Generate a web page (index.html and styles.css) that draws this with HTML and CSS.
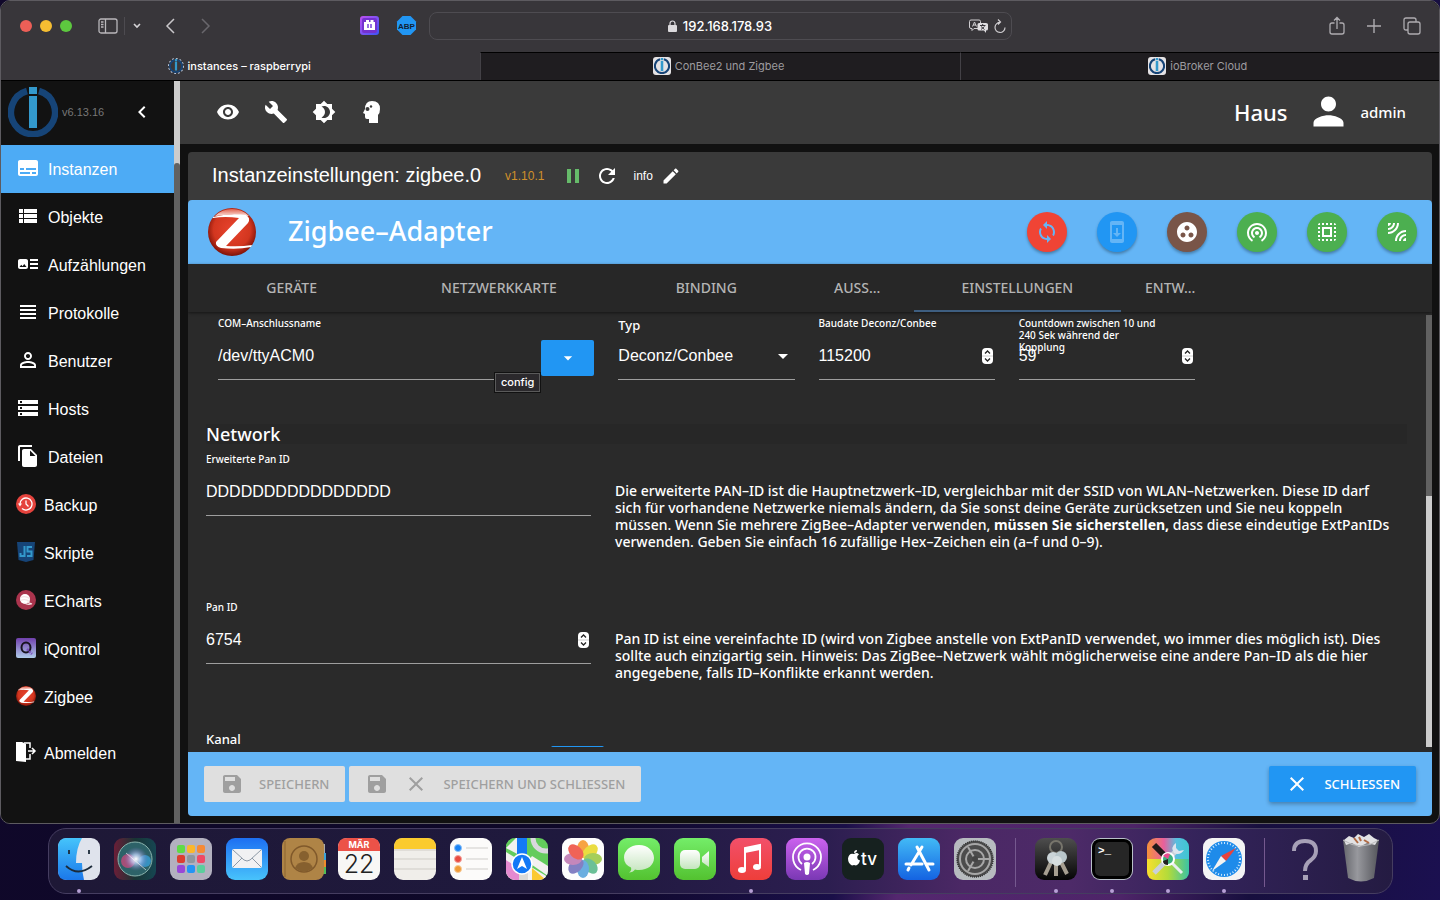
FILE: index.html
```
<!DOCTYPE html>
<html lang="de">
<head>
    <meta charset="UTF-8">
    <meta name="viewport" content="width=device-width, initial-scale=1.0">
    <title>instances - raspberrypi</title>
    <link rel="stylesheet" href="styles.css">
</head>
<body>
    <!-- shared icons -->
    <svg class="sprite" aria-hidden="true">
        <defs>
            <radialGradient id="zigbeeRed" cx="50%" cy="45%" r="55%">
                <stop offset="0" stop-color="#e8442e"/>
                <stop offset="0.7" stop-color="#d2361f"/>
                <stop offset="1" stop-color="#7d1208"/>
            </radialGradient>
            <linearGradient id="zigbeeShine" x1="0" y1="0" x2="0" y2="1">
                <stop offset="0" stop-color="#e0604c"/>
                <stop offset="1" stop-color="#fbe0da"/>
            </linearGradient>
        </defs>
        <symbol id="zigbee" viewBox="0 0 48 48">
            <circle cx="24" cy="24" r="24" fill="url(#zigbeeRed)"/>
            <path d="M7 8Q14 1 24 1t17 7Q24 5 7 8z" fill="url(#zigbeeShine)"/>
            <path d="M5 9Q20 5 38 7q5 3 2 8L18 38q14 1 26-1l-1 2q-14 3-30 1-6-2-5-6L31 10Q17 8 5 10z" fill="#fff"/>
        </symbol>
        <symbol id="iobroker" viewBox="0 0 50 50">
            <path d="M19 4A22 22 0 1 0 31 4" fill="none" stroke="#164477" stroke-width="6.500"/>
            <path d="M21 0h8v7h-8zM21 9h8v32h-8z" fill="#3399cc"/>
        </symbol>
        <symbol id="save" viewBox="0 0 24 24"><path d="M17 3H5c-1.110 0-2 .9-2 2v14c0 1.100.89 2 2 2h14c1.100 0 2-.9 2-2V7l-4-4zm-5 16c-1.660 0-3-1.340-3-3s1.340-3 3-3 3 1.340 3 3-1.340 3-3 3zm3-10H5V5h10v4z"/></symbol>
        <symbol id="close" viewBox="0 0 24 24"><path d="M19 6.410L17.590 5 12 10.590 6.410 5 5 6.410 10.590 12 5 17.590 6.410 19 12 13.410 17.590 19 19 17.590 13.410 12z"/></symbol>
        <symbol id="stepper" viewBox="0 0 11 16">
            <rect width="11" height="16" rx="4" fill="#fff"/>
            <path d="M0 8h11" stroke="#ccc"/>
            <path d="M3 5.500L5.500 3 8 5.500M3 10.500L5.500 13 8 10.500" fill="none" stroke="#222" stroke-width="1.300"/>
        </symbol>
    </svg>

    <div class="window">
        <div class="toolbar">
            <div class="toolbar-left">
                <div class="lights"><i class="red"></i><i class="yellow"></i><i class="green"></i></div>
                <button class="chrome-btn sidebar-btn" aria-label="Seitenleiste"><svg width="20" height="16" viewBox="0 0 20 16" fill="none" stroke="#b9b7bb" stroke-width="1.300"><rect x="1" y="1" width="18" height="14" rx="2"/><path d="M7.500 1v14M3 4h2.500M3 6.500h2.500M3 9h2.500"/></svg></button>
                <button class="chrome-btn menu-btn" aria-label="Tabgruppen"><svg width="8" height="6" viewBox="0 0 8 6" fill="none" stroke="#d5d3d6" stroke-width="1.600"><path d="M1 1l3 3 3-3"/></svg></button>
                <button class="chrome-btn back-btn" aria-label="Zurück"><svg width="10" height="16" viewBox="0 0 10 16" fill="none" stroke="#c9c7ca" stroke-width="1.500"><path d="M9 1L2 8l7 7"/></svg></button>
                <button class="chrome-btn forward-btn" aria-label="Vor"><svg width="10" height="16" viewBox="0 0 10 16" fill="none" stroke="#69676c" stroke-width="1.500"><path d="M1 1l7 7-7 7"/></svg></button>
                <div class="extensions">
                    <button class="chrome-btn" aria-label="Erweiterung">
                        <svg width="19" height="19" viewBox="0 0 19 19">
                            <defs><linearGradient id="ext" x1="0" y1="0" x2="1" y2="1"><stop offset="0" stop-color="#c050f0"/><stop offset="1" stop-color="#3a55f5"/></linearGradient></defs>
                            <rect width="19" height="19" rx="3" fill="url(#ext)"/><rect x="2" y="2" width="15" height="15" rx="2" fill="#7432cf"/>
                            <path d="M4 6h2V4h3v2h1.500V4h3v2H15v8H4z" fill="#fff"/><path d="M8 8v4M11 8v4" stroke="#7442d8" stroke-width="1.500"/>
                        </svg>
                    </button>
                    <button class="chrome-btn" aria-label="Adblock Plus">
                        <svg width="19" height="19" viewBox="0 0 19 19"><path d="M5.500 0h8L19 5.500v8L13.500 19h-8L0 13.500v-8z" fill="#2196f3"/><text x="9.500" y="12.500" class="abp">ABP</text></svg>
                    </button>
                </div>
            </div>
            <div class="address">
                <svg width="9" height="12" viewBox="0 0 9 12"><rect y="5" width="9" height="7" rx="1" fill="#dcdadd"/><path d="M2 5V3.500a2.500 2.500 0 0 1 5 0V5" fill="none" stroke="#dcdadd" stroke-width="1.200"/></svg>
                <span>192.168.178.93</span>
                <div class="address-actions">
                    <svg width="19" height="14" viewBox="0 0 19 14">
                        <path d="M2 1h8q1.500 0 1.500 1.500V8q0 1.500-1.500 1.500H5l-2 2v-2H2Q.5 9.500.5 8V2.500Q.5 1 2 1z" fill="none" stroke="#d0ced1"/>
                        <path d="M3.500 7.500L5.500 3l2 4.500M4 6h3" fill="none" stroke="#d0ced1"/>
                        <path d="M10 4h7q2 0 2 1.500V10q0 1.500-2 1.500V14l-2-2.500h-5Q8.500 11.500 8.500 10V5.500Q8.500 4 10 4z" fill="#e0dee1"/>
                        <path d="M11 6.500h5.500M13.700 5v1.500M12 7.500l3.500 3M15.500 7.500l-3.500 3" stroke="#38363b"/>
                    </svg>
                    <svg width="12" height="14" viewBox="0 0 12 14" fill="none" stroke="#d0ced1" stroke-width="1.200"><path d="M4 .5L6.500 3 4 5.500M6.500 3.500a5 5 0 1 0 4.500 5"/></svg>
                </div>
            </div>
            <div class="toolbar-right">
                <button class="chrome-btn" aria-label="Teilen"><svg width="16" height="20" viewBox="0 0 16 20" fill="none" stroke="#aeacb0" stroke-width="1.300"><path d="M5.500 7H3Q1 7 1 9v7q0 2 2 2h10q2 0 2-2V9q0-2-2-2h-2.500M8 13V1.500M5 4.500l3-3 3 3"/></svg></button>
                <button class="chrome-btn" aria-label="Neuer Tab"><svg width="14" height="14" viewBox="0 0 14 14" fill="none" stroke="#aeacb0" stroke-width="1.400"><path d="M7 0v14M0 7h14"/></svg></button>
                <button class="chrome-btn" aria-label="Tabübersicht"><svg width="18" height="18" viewBox="0 0 18 18" fill="none" stroke="#aeacb0" stroke-width="1.300"><rect x="5" y="5" width="12" height="12" rx="2"/><path d="M5 13H3q-2 0-2-2V3q0-2 2-2h8q2 0 2 2v2"/></svg></button>
            </div>
        </div>
        <nav class="browser-tabs">
            <a href="#" class="browser-tab current"><svg width="16" height="16" viewBox="-4 -4 58 58"><circle cx="25" cy="25" r="27" fill="none" stroke="#b9c4d4" stroke-width="4" stroke-dasharray="7 7"/><use href="#iobroker" width="50" height="50"/></svg>instances – raspberrypi</a>
            <a href="#" class="browser-tab"><span class="favicon"><svg width="16" height="16"><use href="#iobroker"/></svg></span>ConBee2 und Zigbee</a>
            <a href="#" class="browser-tab"><span class="favicon"><svg width="16" height="16"><use href="#iobroker"/></svg></span>ioBroker Cloud</a>
        </nav>

        <div class="app">
            <aside class="sidebar">
                <div class="sidebar-scroll">
                    <div class="brand">
                        <svg width="50" height="50"><use href="#iobroker"/></svg>
                        <span>v6.13.16</span>
                        <button class="icon-btn" aria-label="Menü schließen"><svg width="24" height="24" viewBox="0 0 24 24"><path d="M15.410 7.410L14 6l-6 6 6 6 1.410-1.410L10.830 12z"/></svg></button>
                    </div>
                    <nav class="menu">
                        <a href="#" class="active"><svg width="24" height="24" viewBox="0 0 24 24"><path d="M20 4H4c-1.100 0-2 .9-2 2v12c0 1.100.9 2 2 2h16c1.100 0 2-.9 2-2V6c0-1.100-.9-2-2-2zM4 12h4v2H4v-2zm10 6H4v-2h10v2zm6 0h-4v-2h4v2zm0-4H10v-2h10v2z"/></svg>Instanzen</a>
                        <a href="#"><svg width="24" height="24" viewBox="0 0 24 24"><path d="M3 14h4v-4H3v4zm0 5h4v-4H3v4zM3 9h4V5H3v4zm5 5h13v-4H8v4zm0 5h13v-4H8v4zM8 5v4h13V5H8z"/></svg>Objekte</a>
                        <a href="#"><svg width="24" height="24" viewBox="0 0 24 24"><path d="M22 13h-8v-2h8v2zm0-6h-8v2h8V7zm-8 10h8v-2h-8v2zm-2-8v6c0 1.100-.9 2-2 2H4c-1.100 0-2-.9-2-2V9c0-1.100.9-2 2-2h6c1.100 0 2 .9 2 2zm-1.500 6l-2.250-3-1.750 2.260-1.250-1.510L3.500 15h7z"/></svg>Aufzählungen</a>
                        <a href="#"><svg width="24" height="24" viewBox="0 0 24 24"><path d="M4 15h16v-2H4v2zm0 4h16v-2H4v2zm0-8h16V9H4v2zm0-6v2h16V5H4z"/></svg>Protokolle</a>
                        <a href="#"><svg width="24" height="24" viewBox="0 0 24 24"><path d="M12 5.900c1.160 0 2.100.94 2.100 2.100s-.94 2.100-2.100 2.100S9.900 9.160 9.900 8s.94-2.100 2.100-2.100m0 9c2.970 0 6.100 1.460 6.100 2.100v1.100H5.900V17c0-.64 3.130-2.100 6.100-2.100M12 4C9.790 4 8 5.790 8 8s1.790 4 4 4 4-1.790 4-4-1.790-4-4-4zm0 9c-2.670 0-8 1.340-8 4v3h16v-3c0-2.660-5.330-4-8-4z"/></svg>Benutzer</a>
                        <a href="#"><svg width="24" height="24" viewBox="0 0 24 24"><path d="M2 20h20v-4H2v4zm2-3h2v2H4v-2zM2 4v4h20V4H2zm4 3H4V5h2v2zm-4 7h20v-4H2v4zm2-3h2v2H4v-2z"/></svg>Hosts</a>
                        <a href="#"><svg width="24" height="24" viewBox="0 0 24 24"><path d="M16 1H4c-1.100 0-2 .9-2 2v14h2V3h12V1zm-1 4l6 6v10c0 1.100-.9 2-2 2H7.990C6.890 23 6 22.100 6 21l.01-14c0-1.100.89-2 1.990-2h7zm-1 7h5.500L14 6.500V12z"/></svg>Dateien</a>
                        <a href="#"><svg width="20" height="20" viewBox="0 0 20 20"><circle cx="10" cy="10" r="10" fill="#e5433d"/><path d="M4 10a6 6 0 1 1 2 4.500M10 6.500V10l2.500 2.500" fill="none" stroke="#fff" stroke-width="1.300"/><path d="M2 9.500h4l-2 3z"/></svg>Backup</a>
                        <a href="#"><svg width="20" height="20" viewBox="0 0 20 20"><path d="M1 0h18l-1.500 18L10 20l-7.500-2z" fill="#164477"/><path d="M8.500 4v10H4.500v-3M16 5h-4.500v4.500h4V14h-4.500" fill="none" stroke="#3399cc" stroke-width="2"/></svg>Skripte</a>
                        <a href="#"><svg width="20" height="20" viewBox="0 0 20 20"><circle cx="10" cy="10" r="10" fill="#aa344d"/><circle cx="9" cy="9" r="5"/><path d="M11 12l5 2M8 13q4 2 7 1M4.500 7.500q5-2 9 1M4.500 10.500q5-2 9 1" fill="none" stroke="#f4e3e6" stroke-width="1.300"/></svg>ECharts</a>
                        <a href="#">
                            <svg width="20" height="20" viewBox="0 0 20 20">
                                <defs><linearGradient id="iq" x1="0" y1="0" x2="0" y2="1"><stop offset="0" stop-color="#7040ac"/><stop offset="1" stop-color="#afcbea"/></linearGradient></defs>
                                <rect width="20" height="20" rx="2" fill="url(#iq)"/><ellipse cx="10" cy="9.500" rx="4.500" ry="5" fill="none" stroke="#17131f" stroke-width="2"/><path d="M11 11l5 5" stroke="#7b4ec0" stroke-width="2.500" stroke-dasharray="2 1"/>
                            </svg>iQontrol</a>
                        <a href="#"><svg width="20" height="20"><use href="#zigbee"/></svg>Zigbee</a>
                        <a href="#" class="logout"><svg width="20" height="20" viewBox="0 0 20 20"><path d="M0 0h6l4 2v18l-10-1z"/><path d="M8 1h6v5M14 12v5h-4M12 9h7M16 6l3 3-3 3" fill="none" stroke="#fff" stroke-width="1.500"/></svg>Abmelden</a>
                    </nav>
                </div>
                <div class="scrollbar side-bar"><div class="thumb"></div></div>
            </aside>

            <main>
                <header class="appbar">
                    <button class="icon-btn" aria-label="Anzeigen"><svg width="24" height="24" viewBox="0 0 24 24"><path d="M12 4.500C7 4.500 2.730 7.610 1 12c1.730 4.390 6 7.500 11 7.500s9.270-3.110 11-7.500c-1.730-4.390-6-7.500-11-7.500zM12 17c-2.760 0-5-2.240-5-5s2.240-5 5-5 5 2.240 5 5-2.240 5-5 5zm0-8c-1.660 0-3 1.340-3 3s1.340 3 3 3 3-1.340 3-3-1.340-3-3-3z"/></svg></button>
                    <button class="icon-btn" aria-label="Systemeinstellungen"><svg width="24" height="24" viewBox="0 0 24 24"><path d="M22.700 19l-9.100-9.100c.9-2.300.4-5-1.500-6.900-2-2-5-2.400-7.400-1.300L9 6 6 9 1.600 4.700C.4 7.100.9 10.100 2.900 12.100c1.900 1.900 4.600 2.400 6.900 1.500l9.100 9.100c.4.4 1 .4 1.400 0l2.300-2.300c.5-.4.5-1.100.1-1.400z"/></svg></button>
                    <button class="icon-btn" aria-label="Farbschema"><svg width="24" height="24" viewBox="0 0 24 24"><path d="M20 8.690V4h-4.690L12 .69 8.690 4H4v4.690L.69 12 4 15.310V20h4.690L12 23.310 15.310 20H20v-4.690L23.310 12 20 8.690zM12 18c-.89 0-1.740-.2-2.500-.55C11.560 16.500 13 14.420 13 12s-1.440-4.500-3.500-5.450C10.260 6.200 11.110 6 12 6c3.310 0 6 2.690 6 6s-2.690 6-6 6z"/></svg></button>
                    <button class="icon-btn" aria-label="Expertenmodus"><svg width="24" height="24" viewBox="0 0 24 24"><path d="M12 1q8 0 8 8 0 4-2 6v8H9v-4H7q-2 0-2-2v-3l-2-1 2-4Q5 1 12 1z"/><g fill="#3a3a3a"><circle cx="7.500" cy="9" r="2"/><circle cx="11" cy="6.500" r="1.200"/></g></svg></button>
                    <div class="account">
                        <span class="site">Haus</span>
                        <svg width="45" height="45" viewBox="0 0 24 24"><path d="M12 12c2.210 0 4-1.790 4-4s-1.790-4-4-4-4 1.790-4 4 1.790 4 4 4zm0 2c-2.670 0-8 1.340-8 4v2h16v-2c0-2.660-5.330-4-8-4z"/></svg>
                        <span>admin</span>
                    </div>
                </header>

                <section class="panel">
                    <div class="panel-head">
                        <h1>Instanzeinstellungen: zigbee.0</h1>
                        <span class="version">v1.10.1</span>
                        <button class="icon-btn pause" aria-label="Pause"><svg width="24" height="24" viewBox="0 0 24 24"><path d="M6 19h4V5H6v14zm8-14v14h4V5h-4z"/></svg></button>
                        <button class="icon-btn" aria-label="Neu starten"><svg width="24" height="24" viewBox="0 0 24 24"><path d="M17.650 6.350C16.200 4.900 14.210 4 12 4c-4.420 0-7.990 3.580-7.990 8s3.570 8 7.990 8c3.730 0 6.840-2.550 7.730-6h-2.080c-.82 2.330-3.040 4-5.650 4-3.310 0-6-2.690-6-6s2.690-6 6-6c1.660 0 3.140.69 4.220 1.780L13 11h7V4l-2.350 2.350z"/></svg></button>
                        <button class="icon-btn loglevel">info <svg width="20" height="20" viewBox="0 0 24 24"><path d="M3 17.250V21h3.750L17.810 9.940l-3.750-3.750L3 17.250zM20.710 7.040c.39-.39.39-1.020 0-1.410l-2.340-2.340c-.39-.39-1.020-.39-1.410 0l-1.830 1.830 3.750 3.750 1.830-1.830z"/></svg></button>
                    </div>

                    <div class="adapter-head">
                        <svg width="48" height="48"><use href="#zigbee"/></svg>
                        <h2>Zigbee–Adapter</h2>
                        <div class="round-buttons">
                            <button class="round reset" aria-label="Reset"><svg width="24" height="24" viewBox="0 0 24 24"><path d="M12 4V1L8 5l4 4V6c3.310 0 6 2.690 6 6 0 1.010-.25 1.970-.7 2.800l1.460 1.460C19.540 15.030 20 13.570 20 12c0-4.420-3.580-8-8-8zm0 14c-3.310 0-6-2.690-6-6 0-1.010.25-1.970.7-2.800L5.240 7.740C4.460 8.970 4 10.430 4 12c0 4.420 3.580 8 8 8v3l4-4-4-4v3z"/></svg></button>
                            <button class="round update" aria-label="Update"><svg width="24" height="24" viewBox="0 0 24 24"><path d="M17 1.010L7 1c-1.100 0-2 .9-2 2v18c0 1.100.9 2 2 2h10c1.100 0 2-.9 2-2V3c0-1.100-.9-1.990-2-1.990zM17 19H7V5h10v14zm-1-6h-3V8h-2v5H8l4 4 4-4z"/></svg></button>
                            <button class="round group" aria-label="Gruppe"><svg width="24" height="24" viewBox="0 0 24 24"><path d="M12 2C6.480 2 2 6.480 2 12s4.480 10 10 10 10-4.480 10-10S17.520 2 12 2zM8 17.500c-1.380 0-2.500-1.120-2.500-2.500s1.120-2.500 2.500-2.500 2.500 1.120 2.500 2.500-1.120 2.500-2.500 2.500zM9.500 8c0-1.380 1.120-2.500 2.500-2.500s2.500 1.120 2.500 2.500-1.120 2.500-2.500 2.500S9.500 9.380 9.500 8zm6.500 9.500c-1.380 0-2.500-1.120-2.500-2.500s1.120-2.500 2.500-2.500 2.500 1.120 2.500 2.500-1.120 2.500-2.500 2.500z"/></svg></button>
                            <button class="round" aria-label="Touchlink"><svg width="24" height="24" viewBox="0 0 24 24"><path d="M12 11c-1.100 0-2 .9-2 2s.9 2 2 2 2-.9 2-2-.9-2-2-2zm6 2c0-3.310-2.690-6-6-6s-6 2.690-6 6c0 2.220 1.210 4.150 3 5.190l1-1.740c-1.190-.7-2-1.970-2-3.450 0-2.210 1.790-4 4-4s4 1.790 4 4c0 1.480-.81 2.750-2 3.450l1 1.740c1.790-1.040 3-2.970 3-5.190zM12 3C6.480 3 2 7.480 2 13c0 3.700 2.010 6.920 4.990 8.650l1-1.730C5.610 18.530 4 15.960 4 13c0-4.420 3.580-8 8-8s8 3.580 8 8c0 2.960-1.610 5.530-4 6.920l1 1.730c2.990-1.730 5-4.950 5-8.650 0-5.520-4.480-10-10-10z"/></svg></button>
                            <button class="round" aria-label="QR-Code"><svg width="24" height="24" viewBox="0 0 24 24"><path d="M3 5h2V3c-1.100 0-2 .9-2 2zm0 8h2v-2H3v2zm4 8h2v-2H7v2zM3 9h2V7H3v2zm10-6h-2v2h2V3zm6 0v2h2c0-1.100-.9-2-2-2zM5 21v-2H3c0 1.100.9 2 2 2zm-2-4h2v-2H3v2zM9 3H7v2h2V3zm2 18h2v-2h-2v2zm8-8h2v-2h-2v2zm0 8c1.100 0 2-.9 2-2h-2v2zm0-12h2V7h-2v2zm0 8h2v-2h-2v2zm-4 4h2v-2h-2v2zm0-16h2V3h-2v2zM7 17h10V7H7v10zm2-8h6v6H9V9z"/></svg></button>
                            <button class="round" aria-label="Koppeln"><svg width="24" height="24" viewBox="0 0 24 24"><path d="M6 3H3v3c1.660 0 3-1.340 3-3zm8 0h-2c0 4.970-4.030 9-9 9v2c6.080 0 11-4.930 11-11zm-4 0H8c0 2.760-2.240 5-5 5v2c3.870 0 7-3.130 7-7zm0 18h2c0-4.970 4.030-9 9-9v-2c-6.070 0-11 4.930-11 11zm8 0h3v-3c-1.660 0-3 1.340-3 3zm-4 0h2c0-2.760 2.240-5 5-5v-2c-3.870 0-7 3.130-7 7z"/></svg></button>
                        </div>
                    </div>

                    <nav class="tabs">
                        <a href="#" class="wide">GERÄTE</a>
                        <a href="#" class="wide">NETZWERKKARTE</a>
                        <a href="#" class="wide">BINDING</a>
                        <a href="#">AUSS...</a>
                        <a href="#" class="wide selected">EINSTELLUNGEN</a>
                        <a href="#">ENTW...</a>
                    </nav>

                    <div class="content">
                        <form class="settings" id="settings">
                            <div class="row connection">
                                <div class="field port">
                                    <label for="port">COM–Anschlussname</label>
                                    <div class="control"><input type="text" id="port" value="/dev/ttyACM0"></div>
                                    <button type="button" class="port-btn" aria-label="Ports"><svg width="20" height="20" viewBox="0 0 24 24"><path d="M7 10l5 5 5-5z"/></svg></button>
                                    <div class="tooltip">config</div>
                                </div>
                                <div class="field">
                                    <label for="type" class="large">Typ</label>
                                    <div class="control">
                                        <select id="type"><option>Deconz/Conbee</option></select>
                                        <svg width="24" height="24" viewBox="0 0 24 24"><path d="M7 10l5 5 5-5z"/></svg>
                                    </div>
                                </div>
                                <div class="field">
                                    <label for="baud">Baudate Deconz/Conbee</label>
                                    <div class="control"><input type="number" id="baud" value="115200"><svg class="stepper" width="11" height="16"><use href="#stepper"/></svg></div>
                                </div>
                                <div class="field">
                                    <label for="countdown">Countdown zwischen 10 und 240 Sek während der Kopplung</label>
                                    <div class="control"><input type="number" id="countdown" value="59"><svg class="stepper" width="11" height="16"><use href="#stepper"/></svg></div>
                                </div>
                            </div>

                            <h3>Network</h3>
                            <div class="row described">
                                <div class="field">
                                    <label for="extpan">Erweiterte Pan ID</label>
                                    <div class="control"><input type="text" id="extpan" value="DDDDDDDDDDDDDDDD"></div>
                                </div>
                                <p>Die erweiterte PAN–ID ist die Hauptnetzwerk–ID, vergleichbar mit der SSID von WLAN–Netzwerken. Diese ID darf<br>sich für vorhandene Netzwerke niemals ändern, da Sie sonst deine Geräte zurücksetzen und Sie neu koppeln<br>müssen. Wenn Sie mehrere ZigBee–Adapter verwenden, <b>müssen Sie sicherstellen,</b> dass diese eindeutige ExtPanIDs<br>verwenden. Geben Sie einfach 16 zufällige Hex–Zeichen ein (a–f und 0–9).</p>
                            </div>
                            <div class="row described short">
                                <div class="field">
                                    <label for="pan">Pan ID</label>
                                    <div class="control"><input type="number" id="pan" value="6754"><svg class="stepper" width="11" height="16"><use href="#stepper"/></svg></div>
                                </div>
                                <p>Pan ID ist eine vereinfachte ID (wird von Zigbee anstelle von ExtPanID verwendet, wo immer dies möglich ist). Dies<br>sollte auch einzigartig sein. Hinweis: Das ZigBee–Netzwerk wählt möglicherweise eine andere Pan–ID als die hier<br>angegebene, falls ID–Konflikte erkannt werden.</p>
                            </div>
                            <div class="row channel">
                                <span>Kanal</span>
                                <button type="button" class="port-btn" aria-label="Kanal"></button>
                            </div>
                        </form>
                        <div class="scrollbar"><div class="thumb"></div></div>
                    </div>

                    <footer>
                        <button class="btn" disabled><svg width="24" height="24"><use href="#save"/></svg>SPEICHERN</button>
                        <button class="btn" disabled><svg width="24" height="24"><use href="#save"/></svg><svg width="24" height="24"><use href="#close"/></svg>SPEICHERN UND SCHLIESSEN</button>
                        <button class="btn primary"><svg width="24" height="24"><use href="#close"/></svg>SCHLIESSEN</button>
                    </footer>
                </section>
            </main>
        </div>
    </div>

    <nav class="dock">
        <button class="running" aria-label="Finder">
            <svg viewBox="0 0 42 42">
                <defs><linearGradient id="fi" x1="0" y1="0" x2="0" y2="1"><stop offset="0" stop-color="#45c4fb"/><stop offset="1" stop-color="#1b78ea"/></linearGradient></defs>
                <rect width="42" height="42" rx="9" fill="#dfe3ec"/><path d="M24 0H9Q0 0 0 9v24q0 9 9 9h17q-2-8-2-17h-6Q18 10 24 0z" fill="url(#fi)"/>
                <path d="M11 12v4M31 12v4M8 28q12 11 26 0" fill="none" stroke="#1c2b3a" stroke-width="1.800"/>
            </svg>
        </button>
        <button aria-label="Siri">
            <svg viewBox="0 0 42 42">
                <defs>
                    <linearGradient id="si" x1="0" y1="0" x2="1" y2="0"><stop offset="0" stop-color="#6b1e37"/><stop offset="0.500" stop-color="#183434"/><stop offset="1" stop-color="#164652"/></linearGradient>
                    <radialGradient id="sg"><stop offset="0" stop-color="#fff"/><stop offset="0.400" stop-color="#c3d6ff" stop-opacity="0.700"/><stop offset="1" stop-color="#76b" stop-opacity="0"/></radialGradient>
                </defs>
                <rect width="42" height="42" rx="9" fill="url(#si)"/><circle cx="21" cy="21" r="17" fill="#2d6268" stroke="#8bb4ae"/>
                <circle cx="14" cy="23" r="7" fill="#d8477e" opacity="0.700"/><circle cx="31" cy="23" r="6" fill="#3aa6e4" opacity="0.700"/><circle cx="22" cy="21" r="12" fill="url(#sg)"/><path d="M12 15l20 17" stroke="#fff" opacity="0.600"/>
            </svg>
        </button>
        <button aria-label="Launchpad">
            <svg viewBox="0 0 42 42">
                <rect width="42" height="42" rx="9" fill="#b3b1bf"/>
                <g><rect x="7" y="7" width="8" height="8" rx="2" fill="#5fdc46"/><rect x="17" y="7" width="8" height="8" rx="2" fill="#fbb72c"/><rect x="27" y="7" width="8" height="8" rx="2" fill="#f68a35"/>
                <rect x="7" y="17" width="8" height="8" rx="2" fill="#dd3e30"/><rect x="17" y="17" width="8" height="8" rx="2" fill="#8f979f"/><rect x="27" y="17" width="8" height="8" rx="2" fill="#f04965"/>
                <rect x="7" y="27" width="8" height="8" rx="2" fill="#9947d7"/><rect x="17" y="27" width="8" height="8" rx="2" fill="#2494f4"/><rect x="27" y="27" width="8" height="8" rx="2" fill="#5bcf9c"/></g>
            </svg>
        </button>
        <button aria-label="Mail">
            <svg viewBox="0 0 42 42">
                <defs><linearGradient id="ma" x1="0" y1="0" x2="0" y2="1"><stop offset="0" stop-color="#1d6ff2"/><stop offset="1" stop-color="#48c3fb"/></linearGradient></defs>
                <rect width="42" height="42" rx="9" fill="url(#ma)"/><rect x="6" y="11" width="30" height="19" rx="2" fill="#f1f1f3"/><path d="M7 12l11 10q3 2 6 0l11-10M7 29l9-9M35 29l-9-9" fill="none" stroke="#8d99a6"/>
            </svg>
        </button>
        <button aria-label="Kontakte">
            <svg viewBox="0 0 42 42">
                <path d="M40 6h3v10h-3z" fill="#aaa"/><path d="M40 15h4v8h-4z" fill="#3ea3d8"/><path d="M40 22h4v8h-4z" fill="#ef8b2c"/><path d="M40 29h4v7h-4z" fill="#52bd56"/>
                <rect width="42" height="42" rx="8" fill="#af8446"/><path d="M3 3v36" stroke="#8c6530"/>
                <circle cx="22" cy="21" r="13" fill="none" stroke="#80592b" stroke-width="1.500"/><circle cx="22" cy="18" r="5" fill="#86602f"/><path d="M13 30q2-6 9-6t9 6q-9 7-18 0z" fill="#86602f"/>
            </svg>
        </button>
        <button aria-label="Kalender">
            <svg viewBox="0 0 42 42">
                <rect width="42" height="42" rx="9" fill="#f8f7f5"/><path d="M0 13V9q0-9 9-9h24q9 0 9 9v4z" fill="#ec5248"/>
                <text x="21" y="10" class="cal-month">MÄR</text><text x="21" y="35" class="cal-day">22</text>
            </svg>
        </button>
        <button aria-label="Notizen">
            <svg viewBox="0 0 42 42">
                <rect width="42" height="42" rx="9" fill="#f0eeea"/><path d="M0 11V9q0-9 9-9h24q9 0 9 9v2z" fill="#fbcb2e"/><path d="M0 12h42M0 21h42M0 31h42" stroke="#cfccc6"/>
            </svg>
        </button>
        <button aria-label="Erinnerungen">
            <svg viewBox="0 0 42 42">
                <rect width="42" height="42" rx="9" fill="#fcfbfa"/><path d="M16 10h22M16 21h22M16 31h22" stroke="#cfcdca"/>
                <g stroke-width="1"><circle cx="8" cy="10" r="3.500" fill="#1b83f4" stroke="#8cc0f8"/><circle cx="8" cy="21" r="3.500" fill="#e84b41" stroke="#f4a5a0"/><circle cx="8" cy="31" r="3.500" fill="#f09b38" stroke="#f8cd9b"/></g>
            </svg>
        </button>
        <button aria-label="Karten">
            <svg viewBox="0 0 42 42">
                <defs><clipPath id="mapclip"><rect width="42" height="42" rx="9"/></clipPath></defs>
                <g clip-path="url(#mapclip)">
                    <rect width="42" height="42" fill="#63cc5c"/><path d="M0 14l42 25v3H0z" fill="#f3f1f0"/><path d="M0 22l15 10v10H0z" fill="#e48ad0"/><path d="M26 30l14 12H26z" fill="#fbc931"/><path d="M26 18l16 10v10L22 24z" fill="#f3f1f0"/><path d="M0 10L10 0h5v18z" fill="#f3f1f0"/><path d="M0 0h8L0 9z" fill="#63cc5c"/><circle cx="40" cy="0" r="13" fill="none" stroke="#d8d8dc" stroke-width="5"/>
                    <path d="M11 0h10v24H11z" fill="#1379f6"/><path d="M13 32h9v10h-9z" fill="#dbd9d6"/>
                </g>
                <circle cx="16" cy="26" r="10" fill="#1379f6" stroke="#fff" stroke-width="1.500"/><path d="M16 19l5 12-5-3-5 3z" fill="#fff"/>
            </svg>
        </button>
        <button aria-label="Fotos">
            <svg viewBox="0 0 42 42">
                <rect width="42" height="42" rx="9" fill="#fdfdfd"/>
                <g opacity="0.900"><ellipse cx="21" cy="11" rx="6" ry="9" fill="#f79a2f"/><ellipse cx="21" cy="11" rx="6" ry="9" fill="#e9d92d" transform="rotate(45 21 21)"/><ellipse cx="21" cy="11" rx="6" ry="9" fill="#9cc94a" transform="rotate(90 21 21)"/><ellipse cx="21" cy="11" rx="6" ry="9" fill="#5cba8c" transform="rotate(135 21 21)"/>
                <ellipse cx="21" cy="11" rx="6" ry="9" fill="#5ba6dd" transform="rotate(180 21 21)"/><ellipse cx="21" cy="11" rx="6" ry="9" fill="#7673bd" transform="rotate(225 21 21)"/><ellipse cx="21" cy="11" rx="6" ry="9" fill="#c07bb4" transform="rotate(270 21 21)"/><ellipse cx="21" cy="11" rx="6" ry="9" fill="#ef5346" transform="rotate(315 21 21)"/></g>
            </svg>
        </button>
        <button aria-label="Nachrichten">
            <svg viewBox="0 0 42 42">
                <defs><linearGradient id="gr" x1="0" y1="0" x2="0" y2="1"><stop offset="0" stop-color="#74ed69"/><stop offset="1" stop-color="#53c230"/></linearGradient><linearGradient id="wh" x1="0" y1="0" x2="0" y2="1"><stop offset="0" stop-color="#fff"/><stop offset="1" stop-color="#c4e5bd"/></linearGradient></defs>
                <rect width="42" height="42" rx="9" fill="url(#gr)"/><path d="M21 7c9 0 15 6 15 13s-6 12-15 12q-2 0-4-.5-2 3-6 3 3-2 2-5-7-3-7-10C6 13 12 7 21 7z" fill="url(#wh)"/>
            </svg>
        </button>
        <button aria-label="FaceTime">
            <svg viewBox="0 0 42 42"><rect width="42" height="42" rx="9" fill="url(#gr)"/><rect x="6" y="12" width="20" height="19" rx="5" fill="url(#wh)"/><path d="M28 19l7-6v16l-7-5z" fill="url(#wh)"/></svg>
        </button>
        <button class="running" aria-label="Musik">
            <svg viewBox="0 0 42 42">
                <defs><linearGradient id="mu" x1="0" y1="0" x2="0" y2="1"><stop offset="0" stop-color="#f2506a"/><stop offset="1" stop-color="#ee3e3a"/></linearGradient></defs>
                <rect width="42" height="42" rx="9" fill="url(#mu)"/><path d="M15 31V10l15-3v21" fill="none" stroke="#fff" stroke-width="2"/><path d="M15 10l15-3v5l-15 3z" fill="#fff"/><ellipse cx="12" cy="32" rx="4" ry="3" fill="#fff"/><ellipse cx="27" cy="29" rx="4" ry="3" fill="#fff"/>
            </svg>
        </button>
        <button aria-label="Podcasts">
            <svg viewBox="0 0 42 42">
                <defs><linearGradient id="po" x1="0" y1="0" x2="0" y2="1"><stop offset="0" stop-color="#cb62ee"/><stop offset="1" stop-color="#7a38b4"/></linearGradient></defs>
                <rect width="42" height="42" rx="9" fill="url(#po)"/><g fill="none" stroke="#fff" stroke-width="1.800"><path d="M15 32a14 14 0 1 1 12 0M16 26a8.500 8.500 0 1 1 10 0"/></g><circle cx="21" cy="19" r="3.500" fill="#fff"/><path d="M18 25q3-2 6 0l-1 11q-2 2-4 0z" fill="#fff"/>
            </svg>
        </button>
        <button aria-label="Apple TV">
            <svg viewBox="0 0 42 42">
                <rect width="42" height="42" rx="9" fill="#16211f"/><path d="M12 16q3-2 5 .5-3 2-1 5l2 1q-1 4-4 5-2-1-4 0-4-2-4-7 1-6 6-4.500zM12 15q0-3 3-3 0 3-3 3z" fill="#fff"/><text x="19" y="27" class="tv">tv</text>
            </svg>
        </button>
        <button aria-label="App Store">
            <svg viewBox="0 0 42 42">
                <defs><linearGradient id="as" x1="0" y1="0" x2="0" y2="1"><stop offset="0" stop-color="#42baf6"/><stop offset="1" stop-color="#1463e2"/></linearGradient></defs>
                <rect width="42" height="42" rx="9" fill="url(#as)"/><path d="M19 9l12 23M24 9L13 27M8 26h16M28 26h7M11 30l-1 2" stroke="#fff" stroke-width="3" stroke-linecap="round"/>
            </svg>
        </button>
        <button aria-label="Systemeinstellungen">
            <svg viewBox="0 0 42 42">
                <rect width="42" height="42" rx="9" fill="#b7bbbf"/><circle cx="21" cy="21" r="18" fill="#4c4c4c"/><circle cx="21" cy="21" r="15" fill="none" stroke="#a7a7a7" stroke-width="2"/><circle cx="21" cy="21" r="18" fill="none" stroke="#303030" stroke-width="1.500" stroke-dasharray="1 1"/><circle cx="21" cy="21" r="9" fill="none" stroke="#a7a7a7" stroke-width="2"/><path d="M21 21h14M21 21L14 9M21 21l-7 12" stroke="#a7a7a7" stroke-width="2"/><circle cx="21" cy="21" r="3" fill="#444"/>
            </svg>
        </button>
        <span class="divider"></span>
        <button class="running" aria-label="Schlüsselbundverwaltung">
            <svg viewBox="0 0 42 42">
                <defs><linearGradient id="ke" x1="0" y1="0" x2="0" y2="1"><stop offset="0" stop-color="#4e4e4e"/><stop offset="1" stop-color="#050505"/></linearGradient></defs>
                <rect width="42" height="42" rx="9" fill="url(#ke)"/><circle cx="21" cy="9" r="6" fill="none" stroke="#77756c" stroke-width="2"/>
                <path d="M18 20l-8 17M21 22v16M25 22l7 14" stroke="#a69f91" stroke-width="4"/><circle cx="18" cy="20" r="6" fill="#cbd5d8"/><circle cx="26" cy="19" r="6" fill="#b9c7cb"/><circle cx="22" cy="23" r="5" fill="#d7dfe0"/>
            </svg>
        </button>
        <button class="running" aria-label="Terminal">
            <svg viewBox="0 0 42 42"><rect width="42" height="42" rx="9" fill="#b8c0c8"/><rect x="1" y="1" width="40" height="40" rx="8" fill="#000"/><rect x="4" y="4" width="34" height="34" rx="5" fill="#262626"/><text x="7" y="16" class="prompt">&gt;_</text></svg>
        </button>
        <button class="running" aria-label="ColorSync">
            <svg viewBox="0 0 42 42">
                <defs><linearGradient id="co" x1="0" y1="0" x2="1" y2="0"><stop offset="0" stop-color="#f5923a"/><stop offset="0.400" stop-color="#e85f9c"/><stop offset="0.700" stop-color="#57bfe0"/><stop offset="1" stop-color="#3fc6d0"/></linearGradient><linearGradient id="cp" x1="0" y1="0" x2="1" y2="0"><stop offset="0" stop-color="#f8df2d"/><stop offset="0.500" stop-color="#b3db3a"/><stop offset="1" stop-color="#3bc3a4"/></linearGradient></defs>
                <rect width="42" height="42" rx="9" fill="url(#co)"/><path d="M0 21h42v12q0 9-9 9H9q-9 0-9-9z" fill="url(#cp)"/>
                <path d="M7 7l13 13" stroke="#221a1a" stroke-width="6"/><path d="M22 22l13 13" stroke="#e8eef0" stroke-width="3"/><path d="M7 35l22-22" stroke="#cad0d8" stroke-width="5"/><path d="M29 5q-6 4-2 10 6 3 10-3l-5 1-3-3z" fill="#dce4ee"/>
                <circle cx="21" cy="21" r="6" fill="#3db27d" stroke="#fff" stroke-width="2"/><path d="M21 21l-5-3q3-4 7-2z" fill="#e94b8f"/><path d="M21 21v6q-5 0-5-4z" fill="#222"/>
            </svg>
        </button>
        <button class="running" aria-label="Safari">
            <svg viewBox="0 0 42 42">
                <rect width="42" height="42" rx="9" fill="#f4f4f4"/><circle cx="21" cy="21" r="18" fill="#1e8bea"/><circle cx="21" cy="21" r="16" fill="none" stroke="#d5ecff" stroke-width="2" stroke-dasharray="1 2"/><path d="M33 10L18 18l5 5z" fill="#e8423c"/><path d="M9 33l9-15 5 5z" fill="#f3f3f3"/>
            </svg>
        </button>
        <span class="divider"></span>
        <button aria-label="Unbekannt"><svg viewBox="0 0 42 42"><path d="M10 13Q10 3 21 3t11 10q0 5-5 9-6 4-6 11" fill="none" stroke="#a7a0b7" stroke-width="4"/><rect x="19" y="37" width="5" height="5" fill="#a7a0b7"/></svg></button>
        <button aria-label="Papierkorb">
            <svg viewBox="0 0 42 42">
                <defs><linearGradient id="tr" x1="0" y1="0" x2="1" y2="0"><stop offset="0" stop-color="#6c6e70"/><stop offset="0.400" stop-color="#a4a6a7"/><stop offset="1" stop-color="#595b5d"/></linearGradient></defs>
                <path d="M3 2h36l-5 38q-13 7-26 0z" fill="url(#tr)" opacity="0.900"/><path d="M4 2l5-4 5 2 4-4 6 3 5-3 5 4 4 2-3 5-8-2-8 4-7-4-6 2z" fill="#e2e2e4"/><path d="M14 0l4 5M24 2l5 3M19-1l2 4" stroke="#b06a45" stroke-width="2"/><path d="M3 2q18 12 36 0" fill="none" stroke="#b9b9bb"/>
            </svg>
        </button>
    </nav>
</body>
</html>
```

FILE: styles.css
```
* {
    margin: 0;
    padding: 0;
    box-sizing: border-box;
}

body {
    height: 100vh;
    display: flex;
    flex-direction: column;
    overflow: hidden;
    background: linear-gradient(100deg, #10082a 0%, #0e0828 45%, #1a0f48 62%, #54276f 66%, #4d2468 80%, #170f3e 88%, #1b1050 100%);
    color: #fff;
    font-family: "Noto Sans", "Open Sans", sans-serif;
    font-size: 13px;
}

button {
    font: inherit;
    color: inherit;
    background: none;
    border: none;
    cursor: pointer;
}

a {
    color: inherit;
    text-decoration: none;
}

svg {
    display: block;
    flex: none;
    overflow: visible;
}

svg:not([fill]) {
    fill: currentColor;
}

.sprite {
    position: absolute;
    width: 0;
    height: 0;
}

/* browser window */
.window {
    flex: 1;
    min-height: 0;
    display: flex;
    flex-direction: column;
    overflow: hidden;
    background: #111;
    border: 1px solid #5d5b60;
    border-radius: 10px;
    font-family: "Liberation Sans", Arial, sans-serif;
}

.toolbar {
    height: 51px;
    flex: none;
    display: grid;
    grid-template-columns: 1fr 583px 1fr;
    align-items: center;
    padding-bottom: 2px;
    background: #38363a;
    font-family: Inter, sans-serif;
}

.toolbar-left {
    display: flex;
    align-items: center;
    padding: 0 13px 0 19px;
}

.lights {
    display: flex;
    gap: 8px;
}

.lights i {
    width: 12px;
    height: 12px;
    border-radius: 50%;
}

.red { background: #ed5f57; }
.yellow { background: #f6be32; }
.green { background: #5dc83f; }

.sidebar-btn {
    margin-left: 26px;
}

.menu-btn {
    margin-left: 6px;
    padding: 6px 0 6px 8px;
    border-left: 1px solid #4d4b50;
}

.back-btn {
    margin-left: 24px;
}

.forward-btn {
    margin-left: 26px;
}

.extensions {
    display: flex;
    gap: 18px;
    margin-left: auto;
}

.abp {
    font: bold 8px "Liberation Sans", sans-serif;
    text-anchor: middle;
    fill: #123;
}

.address {
    position: relative;
    height: 28px;
    display: flex;
    align-items: center;
    justify-content: center;
    gap: 6px;
    border: 1px solid #4e4c51;
    border-radius: 8px;
    font-size: 13px;
    font-weight: 500;
}

.address-actions {
    position: absolute;
    right: 5px;
    display: flex;
    align-items: center;
    gap: 6px;
}

.toolbar-right {
    display: flex;
    align-items: center;
    justify-content: flex-end;
    gap: 22px;
    padding-right: 18px;
}

.browser-tabs {
    display: grid;
    grid-template-columns: repeat(3, 1fr);
    height: 29px;
    flex: none;
    border-bottom: 1px solid #000;
    font-family: Inter, sans-serif;
    font-size: 11px;
}

.browser-tab {
    display: flex;
    align-items: center;
    justify-content: center;
    gap: 4px;
    padding: 0 4px 2px 0;
    background: #1f1d20;
    border-top: 1px solid #000;
    border-left: 1px solid #434146;
    color: #9d9b9f;
}

.browser-tab.current {
    background: #38363a;
    border-color: #38363a;
    color: #fff;
    font-weight: 500;
}

.favicon {
    padding: 1px;
    border-radius: 3px;
    background: #e5e3e5;
}

/* admin app */
.app {
    flex: 1;
    min-height: 0;
    display: flex;
}

.sidebar {
    width: 179px;
    flex: none;
    display: flex;
    background: #121212;
}

.sidebar-scroll {
    flex: 1;
    overflow: hidden;
}

.scrollbar {
    width: 6px;
    flex: none;
    background: #ccc;
}

.scrollbar .thumb {
    height: 42%;
    background: #616161;
}

.side-bar {
    display: flex;
    align-items: flex-end;
}

.side-bar .thumb {
    width: 100%;
    height: 89%;
    border-radius: 3px 3px 0 0;
}

.brand {
    height: 64px;
    display: flex;
    align-items: center;
    gap: 4px;
    padding: 0 20px 2px 7px;
    font-size: 11px;
    color: #777;
}

.brand .icon-btn {
    margin-left: auto;
    color: #fff;
}

.menu a {
    height: 48px;
    display: flex;
    align-items: center;
    gap: 8px;
    padding: 2px 15px 0;
    font-size: 16px;
}

.menu svg {
    margin-bottom: 4px;
}

.menu a.active {
    background: #4dabf5;
}

.menu a.logout {
    margin-top: 8px;
}

main {
    flex: 1;
    min-width: 0;
    display: flex;
    flex-direction: column;
}

.icon-btn {
    display: flex;
    align-items: center;
}

.appbar {
    height: 63px;
    flex: none;
    display: flex;
    align-items: center;
    gap: 24px;
    padding: 0 33px 2px 36px;
    background: #3a3a3a;
    font-family: "Noto Sans", sans-serif;
    font-weight: 500;
}

.account {
    display: flex;
    align-items: center;
    gap: 9px;
    margin-left: auto;
    font-size: 15px;
}

.site {
    margin-right: 10px;
    font-size: 22px;
}

.panel {
    flex: 1;
    min-height: 0;
    display: flex;
    flex-direction: column;
    margin: 8px 7px 7px 8px;
    border-radius: 4px;
    overflow: hidden;
    background: #3a3a3a;
}

.panel-head {
    height: 48px;
    flex: none;
    display: flex;
    align-items: center;
    padding: 0 24px;
    gap: 10px;
}

.panel-head h1 {
    padding-bottom: 2px;
    font-size: 20px;
    font-weight: 400;
    margin-right: 14px;
}

.version {
    margin-right: 7px;
    font-size: 12px;
    color: #d0902a;
}

.pause {
    color: #66bb6a;
}

.loglevel {
    gap: 8px;
    margin-left: 4px;
    font-size: 12px;
}

.adapter-head {
    height: 64px;
    flex: none;
    display: flex;
    align-items: center;
    padding: 0 15px 0 20px;
    background: #64b5f6;
    border-radius: 4px 4px 0 0;
    font-family: "Noto Sans", sans-serif;
}

.adapter-head h2 {
    margin-left: 32px;
    padding-bottom: 4px;
    font-size: 27px;
    font-weight: 500;
}

.round-buttons {
    display: flex;
    gap: 30px;
    margin-left: auto;
}

.round {
    width: 40px;
    height: 40px;
    display: flex;
    align-items: center;
    justify-content: center;
    border-radius: 50%;
    background: #4caf50;
    box-shadow: 0 2px 3px rgba(0, 0, 0, 0.3);
}

.round.reset {
    background: #f04435;
    color: #64b5f6;
}

.round.update {
    background: #2196f3;
    color: #64b5f6;
}

.round.group {
    background: #795548;
}

.tabs {
    height: 48px;
    flex: none;
    display: grid;
    grid-template-columns: repeat(12, 1fr);
    background: #272727;
    box-shadow: 0 1px 3px rgba(0, 0, 0, 0.5);
    position: relative;
    font-family: "Noto Sans", sans-serif;
    font-size: 14px;
    font-weight: 500;
    line-height: 48px;
    color: #b4b4b4;
}

.tabs a {
    height: 48px;
    padding: 0 24px;
}

.tabs .wide {
    grid-column: span 2;
    text-align: center;
}

.tabs .selected {
    border-bottom: 2px solid #3e5e80;
}

.content {
    flex: 1;
    min-height: 0;
    display: flex;
    padding: 3px 0 5px;
    background: #2a2a2a;
    font-family: "Noto Sans", sans-serif;
    font-weight: 500;
}

.settings {
    flex: 1;
    min-width: 0;
    overflow: hidden;
    padding: 0 19px 0 18px;
}

.field {
    position: relative;
    min-width: 0;
    padding-top: 24px;
}

.field label {
    position: absolute;
    top: 9px;
    left: 0;
    width: 149px;
    font-size: 10px;
    line-height: 12px;
}

.connection {
    display: grid;
    grid-template-columns: 4fr 2fr 2fr 2fr 2fr;
    height: 109px;
}

.connection .field {
    margin: 0 12px;
    padding-top: 17px;
}

.connection label {
    top: 2px;
}

.connection label.large {
    top: 4px;
    font-size: 13px;
}

.control {
    height: 48px;
    display: flex;
    align-items: center;
    border-bottom: 1px solid #9e9e9e;
}

.control input,
.control select {
    flex: 1;
    min-width: 0;
    height: 47px;
    border: none;
    outline: none;
    background: transparent;
    color: #fff;
    font-family: "Liberation Sans", Arial, sans-serif;
    font-size: 16px;
    appearance: none;
}

.control input[type="number"] {
    appearance: textfield;
}

.stepper {
    margin-right: 2px;
}

.field.port {
    display: flex;
}

.port .control {
    flex: 1;
}

.port-btn {
    width: 53px;
    height: 36px;
    display: flex;
    align-items: center;
    justify-content: center;
    background: #2196f3;
    border-radius: 2px;
}

.port .port-btn {
    margin-top: 8px;
}

.tooltip {
    position: absolute;
    top: 58px;
    right: 54px;
    height: 19px;
    padding: 0 5px;
    border: 1px solid #5a5a5a;
    outline: 1px solid #111;
    background: #2b292c;
    font-family: Inter, sans-serif;
    font-size: 11px;
    line-height: 17px;
}

h3 {
    height: 20px;
    background: #272727;
    font-size: 18px;
    font-weight: 500;
    line-height: 20px;
}

.described {
    display: grid;
    grid-template-columns: 385fr 792fr;
    gap: 24px;
    height: 148px;
}

.described p {
    min-width: 0;
    padding-top: 38px;
    font-size: 14px;
    line-height: 17px;
    white-space: nowrap;
}

.described.short {
    height: 132px;
}

.channel {
    display: flex;
    align-items: flex-start;
    padding-top: 6px;
}

.channel .port-btn {
    margin: 16px 0 0 310px;
}

footer {
    height: 64px;
    flex: none;
    display: flex;
    align-items: center;
    gap: 4px;
    padding: 0 16px;
    background: #64b5f6;
    font-family: "Noto Sans", sans-serif;
    font-weight: 500;
}

.btn {
    height: 36px;
    display: flex;
    align-items: center;
    gap: 15px;
    padding: 0 16px;
    border-radius: 2px;
    font-size: 13px;
    background: #dfdfdf;
    color: #9f9f9f;
}

.btn.primary {
    margin-left: auto;
    background: #2196f3;
    color: #fff;
    box-shadow: 0 2px 4px rgba(0, 0, 0, 0.3);
}

/* dock */
.dock {
    width: max-content;
    height: 66px;
    flex: none;
    display: flex;
    gap: 14px;
    margin: 4px auto 6px;
    padding: 9px 10px 0 9px;
    border: 1px solid #453d60;
    border-radius: 18px;
    background: linear-gradient(90deg, #1e1836 0%, #1f193e 40%, #2c1e50 58%, #4b2865 68%, #4d2a68 76%, #33235a 86%, #241b42 100%);
}

.dock button {
    position: relative;
    width: 42px;
    height: 42px;
}

.dock svg {
    width: 42px;
    height: 42px;
}

.dock .running::after {
    content: "";
    position: absolute;
    left: 19px;
    bottom: -13px;
    width: 4px;
    height: 4px;
    border-radius: 50%;
    background: #b7a0d6;
}

.divider {
    width: 1px;
    height: 49px;
    margin: 0 5px;
    background: #75598f;
}

.cal-month {
    font: bold 9px Inter, sans-serif;
    text-anchor: middle;
    fill: #fff;
}

.cal-day {
    font: 300 25px Inter, sans-serif;
    text-anchor: middle;
    fill: #222;
}

.tv {
    font: 500 17px Inter, sans-serif;
    fill: #fff;
}

.prompt {
    font: bold 11px "Liberation Mono", monospace;
    fill: #fff;
}
```
